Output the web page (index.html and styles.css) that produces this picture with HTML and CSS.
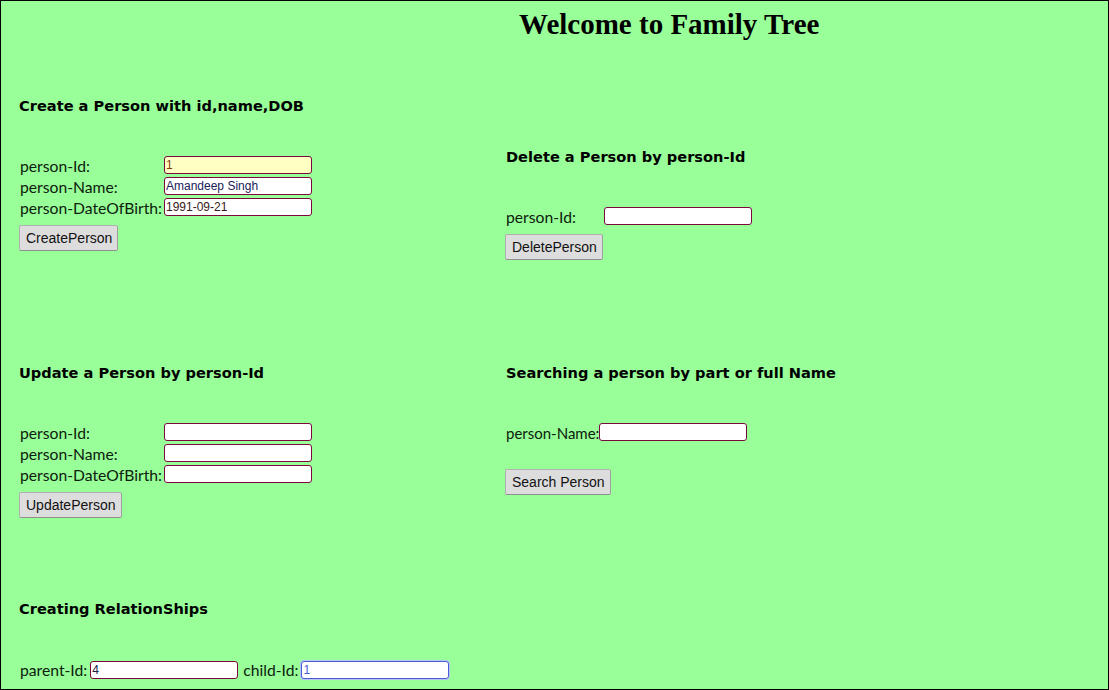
FILE: index.html
```html
<!DOCTYPE html>
<html>
<head>
<meta charset="utf-8">
<title>Family Tree</title>
<link rel="stylesheet" href="styles.css">
</head>
<body>
<div class="page">
  <h1 class="title">Welcome to Family Tree</h1>

  <div class="grid row1">
    <div class="cell">
      <h3 class="heading">Create a Person with id,name,DOB</h3>
      <div class="field"><span class="label wide">person-Id:</span><input class="input yellow" type="text" value="1"></div>
      <div class="field"><span class="label wide">person-Name:</span><input class="input name" type="text" value="Amandeep Singh"></div>
      <div class="field"><span class="label wide">person-DateOfBirth:</span><input class="input dob" type="text" value="1991-09-21"></div>
      <button class="btn">CreatePerson</button>
    </div>
    <div class="cell right shift">
      <h3 class="heading">Delete a Person by person-Id</h3>
      <div class="field"><span class="label mid">person-Id:</span><input class="input" type="text"></div>
      <button class="btn">DeletePerson</button>
    </div>
  </div>

  <div class="grid row2">
    <div class="cell">
      <h3 class="heading">Update a Person by person-Id</h3>
      <div class="field"><span class="label wide">person-Id:</span><input class="input" type="text"></div>
      <div class="field"><span class="label wide">person-Name:</span><input class="input" type="text"></div>
      <div class="field"><span class="label wide">person-DateOfBirth:</span><input class="input" type="text"></div>
      <button class="btn">UpdatePerson</button>
    </div>
    <div class="cell right">
      <h3 class="heading">Searching a person by part or full Name</h3>
      <div class="field search"><span class="label">person-Name:</span><input class="input" type="text"></div>
      <button class="btn gap">Search Person</button>
    </div>
  </div>

  <div class="row3">
    <h3 class="heading rel">Creating RelationShips</h3>
    <div class="field inline">
      <span class="label parent">parent-Id:</span><input class="input" type="text" value="4">
      <span class="label child">child-Id:</span><input class="input focus" type="text" value="1">
    </div>
  </div>
</div>
</body>
</html>
```

FILE: styles.css
```css
html, body {
  margin: 0;
  padding: 0;
}

.page {
  box-sizing: border-box;
  width: 1109px;
  height: 690px;
  border: 1px solid #000;
  background: #99ff99;
  padding-left: 18px;
  overflow: hidden;
}

.title {
  margin: 0;
  padding: 7px 0 0 500px;
  font: bold 29px/32px "Liberation Serif", serif;
  color: #000;
}

.grid {
  display: grid;
  grid-template-columns: 486px 1fr;
  align-items: start;
}

.row1 {
  margin-top: 56px;
  height: 163px;
}

.row2 {
  margin-top: 104px;
  height: 154px;
}

.row3 {
  margin-top: 82px;
}

.shift {
  margin-top: 51px;
}

.heading {
  margin: 0 0 40px;
  font: bold 14.6px/20px "DejaVu Sans", sans-serif;
  color: #000;
}

.right .heading {
  padding-left: 1px;
}

.heading.rel {
  margin-bottom: 42px;
}

.field {
  display: flex;
  align-items: flex-start;
  height: 21px;
}

.label {
  font: 15.7px/18px "Lato", sans-serif;
  color: #0c200c;
  padding-left: 1px;
  margin-top: 1px;
}

.label.wide {
  width: 145px;
  box-sizing: border-box;
}

.label.mid {
  width: 99px;
  box-sizing: border-box;
}

.label.parent {
  margin-right: 3px;
}

.label.child {
  margin-left: 4px;
  margin-right: 3px;
}

.search {
  margin-top: 2px;
}

.search .label {
  font-size: 15px;
}

.input {
  box-sizing: border-box;
  width: 148px;
  height: 18px;
  margin: 0;
  padding: 0 1px;
  border: 1px solid #7a0a3c;
  border-radius: 3px;
  background: #fff;
  font: 12px/16px "Liberation Sans", Arial, sans-serif;
  color: #202040;
  outline: none;
}

.input.yellow {
  background: #ffffc4;
  color: #8a3a10;
}

.input.name {
  color: #20205a;
}

.input.dob {
  color: #3a1a1a;
}

.input.focus {
  border-color: #4a5ed8;
  box-shadow: 0 0 0 1px #b8c4f0;
  color: #4a5ed8;
}

.btn {
  display: block;
  margin-top: 6px;
  height: 26px;
  padding: 1px 5px 1px 6px;
  font: 14px "Liberation Sans", Arial, sans-serif;
  color: #111;
  background: #dddddd;
  border: 1px solid #b0b0b0;
  border-bottom-color: #8f8f8f;
  border-right-color: #9f9f9f;
  border-radius: 2px;
}

.btn.gap {
  margin-top: 25px;
}

.inline .label {
  margin-top: 0;
}
```
